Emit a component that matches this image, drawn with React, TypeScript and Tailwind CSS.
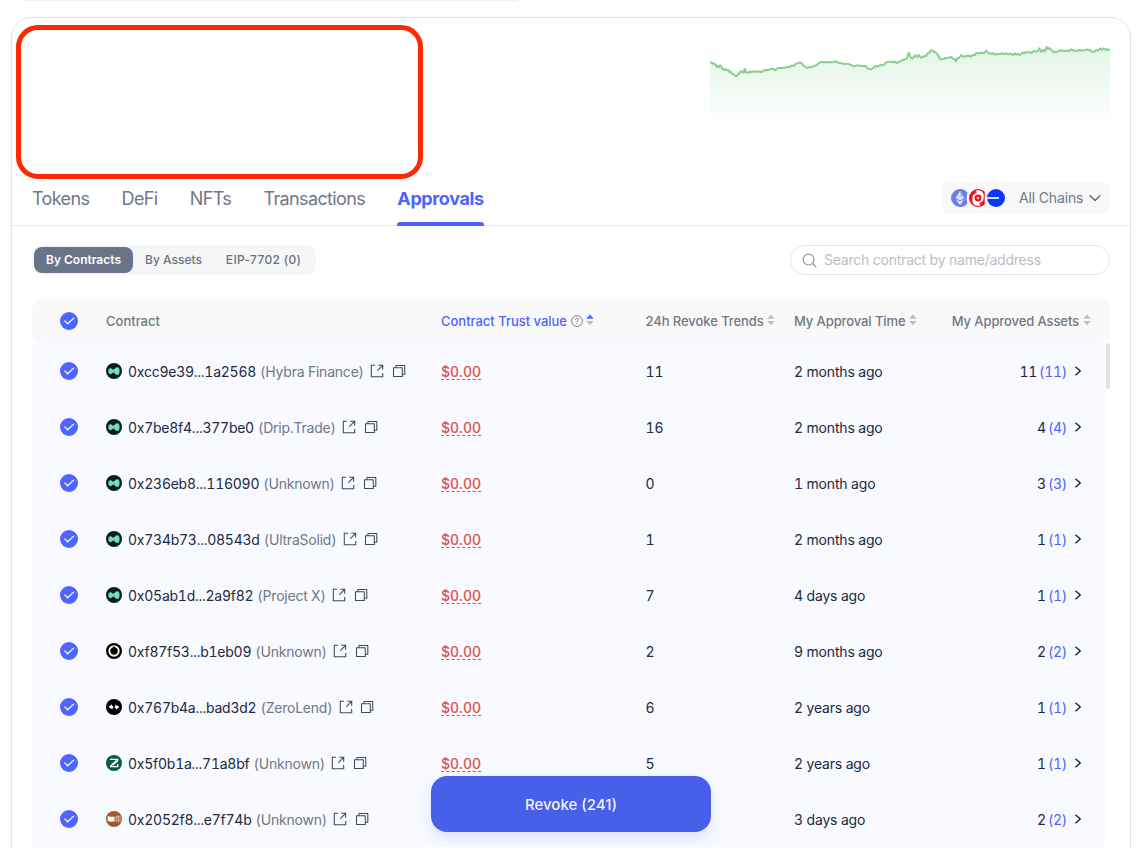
import type { ReactNode } from "react";

type Row = {
  logo: "hyper" | "ring" | "arrows" | "zee" | "token";
  address: string;
  name: string;
  trend: string;
  time: string;
  assets: string;
};

const rows: Row[] = [
  { logo: "hyper", address: "0xcc9e39...1a2568", name: "Hybra Finance", trend: "11", time: "2 months ago", assets: "11" },
  { logo: "hyper", address: "0x7be8f4...377be0", name: "Drip.Trade", trend: "16", time: "2 months ago", assets: "4" },
  { logo: "hyper", address: "0x236eb8...116090", name: "Unknown", trend: "0", time: "1 month ago", assets: "3" },
  { logo: "hyper", address: "0x734b73...08543d", name: "UltraSolid", trend: "1", time: "2 months ago", assets: "1" },
  { logo: "hyper", address: "0x05ab1d...2a9f82", name: "Project X", trend: "7", time: "4 days ago", assets: "1" },
  { logo: "ring", address: "0xf87f53...b1eb09", name: "Unknown", trend: "2", time: "9 months ago", assets: "2" },
  { logo: "arrows", address: "0x767b4a...bad3d2", name: "ZeroLend", trend: "6", time: "2 years ago", assets: "1" },
  { logo: "zee", address: "0x5f0b1a...71a8bf", name: "Unknown", trend: "5", time: "2 years ago", assets: "1" },
  { logo: "token", address: "0x2052f8...e7f74b", name: "Unknown", trend: "", time: "3 days ago", assets: "2" },
];

function Logo({ kind }: { kind: Row["logo"] }) {
  return (
    <svg viewBox="0 0 16 16" className="size-4 shrink-0">
      {kind === "hyper" && (
        <>
          <circle cx="8" cy="8" r="8" fill="#06211d" />
          <path d="M2.4 8C2.4 6 3 5.2 4.5 5.2 6 5.2 6.3 6.6 7.4 6.6 8.8 6.6 8.9 4.2 11.2 4.2 13 4.2 13.6 5.8 13.6 8 13.6 10.2 13 12 11.2 12 8.9 12 8.8 9.6 7.4 9.6 6.3 9.6 6 11.2 4.5 11.2 3 11.2 2.4 10 2.4 8Z" fill="#72dcc0" />
        </>
      )}
      {kind === "ring" && (
        <>
          <circle cx="8" cy="8" r="8" fill="#050500" />
          <circle cx="8" cy="8" r="4.7" fill="#050500" stroke="#fffef0" strokeWidth="1.9" />
          <path d="M8 2.8 9.6 5.6H6.4Z" fill="#050500" />
        </>
      )}
      {kind === "arrows" && (
        <>
          <circle cx="8" cy="8" r="8" fill="#000" />
          <path d="M2.6 8 6 5.2v1.8h1.6L6.6 9v1.6ZM13.4 8 10 10.8V9H8.4l1-2V5.4Z" fill="#fff" />
        </>
      )}
      {kind === "zee" && (
        <>
          <circle cx="8" cy="8" r="8" fill="#075b43" />
          <path d="M4 4.4h7.6v1.5L6.8 10M4 11.6h7.8V9M4.6 10.9 10.5 5.6" fill="none" stroke="#fff" strokeWidth="1.3" />
        </>
      )}
      {kind === "token" && (
        <>
          <circle cx="8" cy="8" r="8" fill="#a3592f" />
          <path d="M1.8 5.2h1.4l.6.6h4.7v4.8H2.6L1.6 9Z" fill="#fff" />
          <path d="M10.2 5v6M12.2 4.6v6.8M14 5.4v5" stroke="#f6dccb" strokeWidth="1.2" strokeDasharray="1.4 .6" />
        </>
      )}
    </svg>
  );
}

function Check() {
  return (
    <svg viewBox="0 0 18 18" className="size-[18px] shrink-0">
      <circle cx="9" cy="9" r="9" fill="#4c65ff" />
      <path d="m4.7 8.9 3 2.9 6-5.7" fill="none" stroke="#fff" strokeWidth="1.25" strokeLinecap="round" strokeLinejoin="round" />
    </svg>
  );
}

function Sort({ active = false }: { active?: boolean }) {
  return (
    <svg viewBox="0 0 8 12" className="mb-[2px] ml-[3.5px] h-3 w-2 shrink-0">
      <path d="M4 .6 7.8 4.8H.2Z" fill={active ? "#4c65ff" : "#bcbec2"} />
      <path d="M4 11.2 7.8 7H.2Z" fill="#bcbec2" />
    </svg>
  );
}

function External() {
  return (
    <svg viewBox="0 0 14 14" className="ml-[6.5px] size-3.5 shrink-0" fill="none" stroke="#3e495e" strokeWidth="1.05">
      <path d="M5 1.3H1.3v11.4h11.4V9M8.3 1.3h4.4v4.4M12.7 1.3 7.3 6.7" />
    </svg>
  );
}

function Copy() {
  return (
    <svg viewBox="0 0 14 14" className="ml-[7.5px] size-3.5 shrink-0" fill="none" stroke="#3e495e" strokeWidth="1.05" strokeLinejoin="round">
      <path d="M1.5 3.7h8.8v8.8H1.5ZM3.9 3.7V1.5h8.9v8.7h-2.5" />
    </svg>
  );
}

function Tab({ children, active = false }: { children: ReactNode; active?: boolean }) {
  return (
    <div
      className={
        active
          ? "flex h-[44px] w-[87px] flex-col justify-between whitespace-nowrap text-[18px] leading-[34px] font-bold tracking-[-0.38px] text-[#4c65ff]"
          : "h-[44px] whitespace-nowrap text-[18px] leading-[34px] tracking-[-0.64px] text-[#707787]"
      }
    >
      {children}
      {active && <div className="h-1 rounded-t-[3px] bg-[#4c65ff]" />}
    </div>
  );
}

const line =
  "M30 97 34 98 38 101 42 100 46 104 50 110 53 107 57 112 60 106 64 109 67 117 72 119 76 117 80 121 85 120 88 126 92 125 96 131 101 132 104 137 111 138 115 131 119 129 123 123 127 126 131 128 134 116 138 127 146 128 151 124 155 127 161 124 169 126 177 124 184 126 190 123 194 120 200 121 207 119 213 117 220 116 226 121 232 115 239 113 250 114 259 111 267 112 275 107 282 107 288 101 295 99 302 97 307 102 311 107 317 111 323 114 329 110 335 112 342 108 350 106 357 99 365 96 373 97 383 96 394 97 401 96 408 94 414 98 424 100 434 102 443 101 453 105 463 109 473 106 485 108 496 108 503 115 511 118 518 115 525 108 533 110 541 105 550 106 558 98 567 95 576 96 584 95 590 99 599 95 608 90 615 88 621 85 626 68 632 82 636 86 641 82 646 76 652 81 657 75 664 84 670 79 677 79 683 70 688 68 692 61 699 63 705 66 712 72 716 80 722 88 729 88 737 84 745 83 753 81 760 87 764 87 768 94 773 83 778 83 783 75 790 80 799 78 807 77 812 80 818 75 824 76 829 68 836 71 842 68 849 69 854 68 859 62 866 70 873 71 880 70 887 74 893 71 899 73 906 69 913 73 919 70 925 73 932 71 938 75 943 70 949 74 954 71 959 75 965 71 968 67 973 70 977 66 983 68 989 66 994 69 1001 63 1008 65 1013 63 1018 55 1024 65 1030 60 1035 64 1039 51 1044 57 1048 54 1056 62 1063 67 1072 65 1080 61 1089 63 1098 62 1107 63 1114 58 1121 62 1130 62 1140 60 1149 62 1159 59 1170 60 1176 65 1183 66 1188 60 1194 62 1200 55 1206 60 1211 55 1217 60 1221 57 1225 60 1230 58";

function Chart() {
  return (
    <svg viewBox="30 30 1200 270" className="h-[90px] w-[400px]">
      <defs>
        <linearGradient id="fill" x1="0" y1="50" x2="0" y2="290" gradientUnits="userSpaceOnUse">
          <stop offset="0" stopColor="#7fcf90" stopOpacity=".22" />
          <stop offset="1" stopColor="#7fcf90" stopOpacity="0" />
        </linearGradient>
      </defs>
      <path d={line + "V290H30Z"} fill="url(#fill)" />
      <path d={line} fill="none" stroke="#87d08f" strokeWidth="6" strokeLinejoin="round" />
    </svg>
  );
}

function Chains() {
  return (
    <div className="flex h-8 w-[168px] items-center rounded-lg bg-[#f8f8f9] pl-[9px]">
      <svg viewBox="0 0 54 18" className="h-[18px] w-[54px]">
        <path d="M9 0c3.4 0 6 1.5 7.5 3.7C15.4 7 15.4 11 16.5 14.3 15 16.5 12.4 18 9 18A9 9 0 0 1 9 0Z" fill="#6b80e4" />
        <path d="m9 2 4.3 7L9 11.5 4.7 9Z" fill="#dbe1fb" />
        <path d="m9 2 4.3 7L9 7.2Z" fill="#b3c0f5" />
        <path d="m4.8 10.3 4.2 2.4 4.2-2.4L9 16Z" fill="#eef1ff" />
        <path d="M27 0a9 9 0 1 0 0 18c2.8 0 5-1 6.7-2.8V2.8A9 9 0 0 0 27 0Z" fill="#f30d18" />
        <path d="M25.5 1.4c3.2-.7 6.6.8 7.1 4.1.4 3.3-.2 6.500-1.800 9l-2.300 2.200c-3.200.7-6.600-.8-7.100-4.100-.4-3.300.2-6.500 1.800-9Z" fill="#fff" />
        <circle cx="27" cy="9" r="3.4" fill="#f30d18" />
        <path d="M22 5.5 25.5 2.6M28.500 15.400 32 12.500" stroke="#f30d18" strokeWidth="1.6" />
        <path d="M27 7.700v2.600M25.700 9h2.600" stroke="#fff" strokeWidth="1" />
        <circle cx="45" cy="9" r="9" fill="#0a38ff" />
        <path d="M36.3 9h11.7" stroke="#fff" strokeWidth="1.7" />
      </svg>
      <span className="ml-[14px] w-[65px] pb-[2px] text-[14px] tracking-[-0.15px] whitespace-nowrap text-[#707787]">All Chains</span>
      <svg viewBox="0 0 12 8" className="ml-[5px] h-2 w-3" fill="none" stroke="#5d6677" strokeWidth="1.3">
        <path d="m.7 1.3 5.3 5.2 5.3-5.2" />
      </svg>
    </div>
  );
}

const grid = "grid grid-cols-[74px_335px_204.5px_148.5px_1fr] items-center";

export default function App() {
  return (
    <div className="relative h-[848px] w-[1143px] overflow-hidden bg-white font-['Inter','Liberation_Sans',sans-serif] text-[#20293f]">
      <div className="ml-[25px] h-px w-[492px] bg-[#f1f1f2]" />
      <main className="mt-4 ml-[11px] h-[860px] w-[1120px] rounded-[20px] border border-[#e3e4e9]">
        <header className="flex h-[164px] justify-end pt-[22px] pr-5">
          <Chart />
        </header>
        <nav className="flex h-[44px] items-start justify-between border-b border-[#e7e8ea] pr-5 pl-5">
          <div className="flex gap-[32.3px]">
            <Tab>Tokens</Tab>
            <Tab>DeFi</Tab>
            <Tab>NFTs</Tab>
            <Tab>Transactions</Tab>
            <Tab active>Approvals</Tab>
          </div>
          <Chains />
        </nav>

        <div className="mt-[19px] flex h-[30px] justify-between px-5">
          <div className="flex w-[284px] items-center rounded-[10px] bg-[#f5f7f7] p-[2px] text-[12px] font-medium text-[#6b7385]">
            <div className="flex h-[26px] w-[99px] items-center justify-center rounded-[8px] bg-[#6a7488] font-semibold text-white">By Contracts</div>
            <div className="w-[81px] text-center">By Assets</div>
            <div className="w-[99px] text-center tracking-[0.3px]">EIP-7702 (0)</div>
          </div>
          <div className="flex w-[320px] items-center rounded-full border border-[#e3e5e9] pl-[11px] text-[14px] tracking-[-0.23px] text-[#bbbec6]">
            <svg viewBox="0 0 16 16" className="mr-[7px] size-[15px]" fill="none" stroke="#8d93a0" strokeWidth="1.2" strokeLinecap="round">
              <circle cx="7" cy="7" r="5.8" />
              <path d="m11.2 11.2 3.8 3.8" />
            </svg>
            <span className="pb-[2px]">Search contract by name/address</span>
          </div>
        </div>

        <section className="mt-6 ml-5 w-[1078px]">
          <div className={`${grid} h-11 rounded-[10px] bg-[#f9f9f9] text-[13px] font-medium tracking-[-0.07px] text-[#707787]`}>
            <div className="flex pl-7"><Check /></div>
            <div className="pt-[2px] tracking-normal">Contract</div>
            <div className="flex items-center whitespace-nowrap text-[#4c65ff]">
              <span className="pt-[2px] tracking-[-0.02px]">Contract Trust value</span>
              <svg viewBox="0 0 12 12" className="ml-1 size-3" fill="none" stroke="#707787" strokeWidth=".9">
                <circle cx="6" cy="6" r="5.4" />
                <path d="M4.4 4.8C4.4 3.7 5 3.2 6 3.2s1.7.6 1.7 1.5C7.7 5.7 6 5.8 6 7.2M6 8v1" />
              </svg>
              <Sort active />
            </div>
            <div className="flex items-center whitespace-nowrap"><span className="pt-[2px]">24h Revoke Trends</span><Sort /></div>
            <div className="flex items-center whitespace-nowrap">
              <span className="pt-[2px] tracking-[-0.1px]">My Approval Time</span><Sort />
              <span className="ml-auto pt-[2px] tracking-[-0.1px]">My Approved Assets</span><Sort />
              <span className="w-[19.5px]" />
            </div>
          </div>
          <div className="flex justify-between">
            <div className="w-[1073px] bg-[#f8faff] text-[14px] tabular-nums">
              {rows.map((r) => (
                <div key={r.address} className={`${grid} h-14`}>
                  <div className="flex pl-7"><Check /></div>
                  <div className="flex items-center whitespace-nowrap">
                    <Logo kind={r.logo} />
                    <span className="mt-px ml-[6px] tracking-[-0.25px]">{r.address}</span>
                    <span className="mt-px ml-1 tracking-[-0.22px] text-[#707787]">({r.name})</span>
                    <External />
                    <Copy />
                  </div>
                  <div className="flex">
                    <span className="mt-px h-[17px] border-b border-dashed border-[#e34e50] leading-[17px] font-medium text-[#e34e50]">$0.00</span>
                  </div>
                  <div className="pt-px">{r.trend}</div>
                  <div className="flex items-center">
                    <span className="mt-px tracking-[-0.17px]">{r.time}</span>
                    <span className="mt-px ml-auto tracking-[-0.25px]">{r.assets}</span>
                    <span className="mt-px ml-[2px] tracking-[-0.3px] text-[#4c65ff]">({r.assets})</span>
                    <svg viewBox="0 0 8 12" className="mr-[23px] ml-[7px] h-3 w-2" fill="none" stroke="#192945" strokeWidth="1.5">
                      <path d="m1.5 1.7 4.7 4.3-4.7 4.3" />
                    </svg>
                  </div>
                </div>
              ))}
            </div>
            <div className="h-[46px] w-1 rounded-full bg-[#dfe3e6]" />
          </div>
        </section>
      </main>

      <div className="absolute top-[25px] left-4 h-[154px] w-[407px] rounded-[22px] border-[5px] border-[#fb2906]" />
      <button className="absolute top-[776px] left-[431px] h-14 w-[280px] rounded-2xl bg-[#485fe9] pt-[2px] text-[15px] font-medium text-[#edf0ff] shadow-[0_6px_14px_rgba(76,101,255,0.16)]">
        Revoke (241)
      </button>
    </div>
  );
}
